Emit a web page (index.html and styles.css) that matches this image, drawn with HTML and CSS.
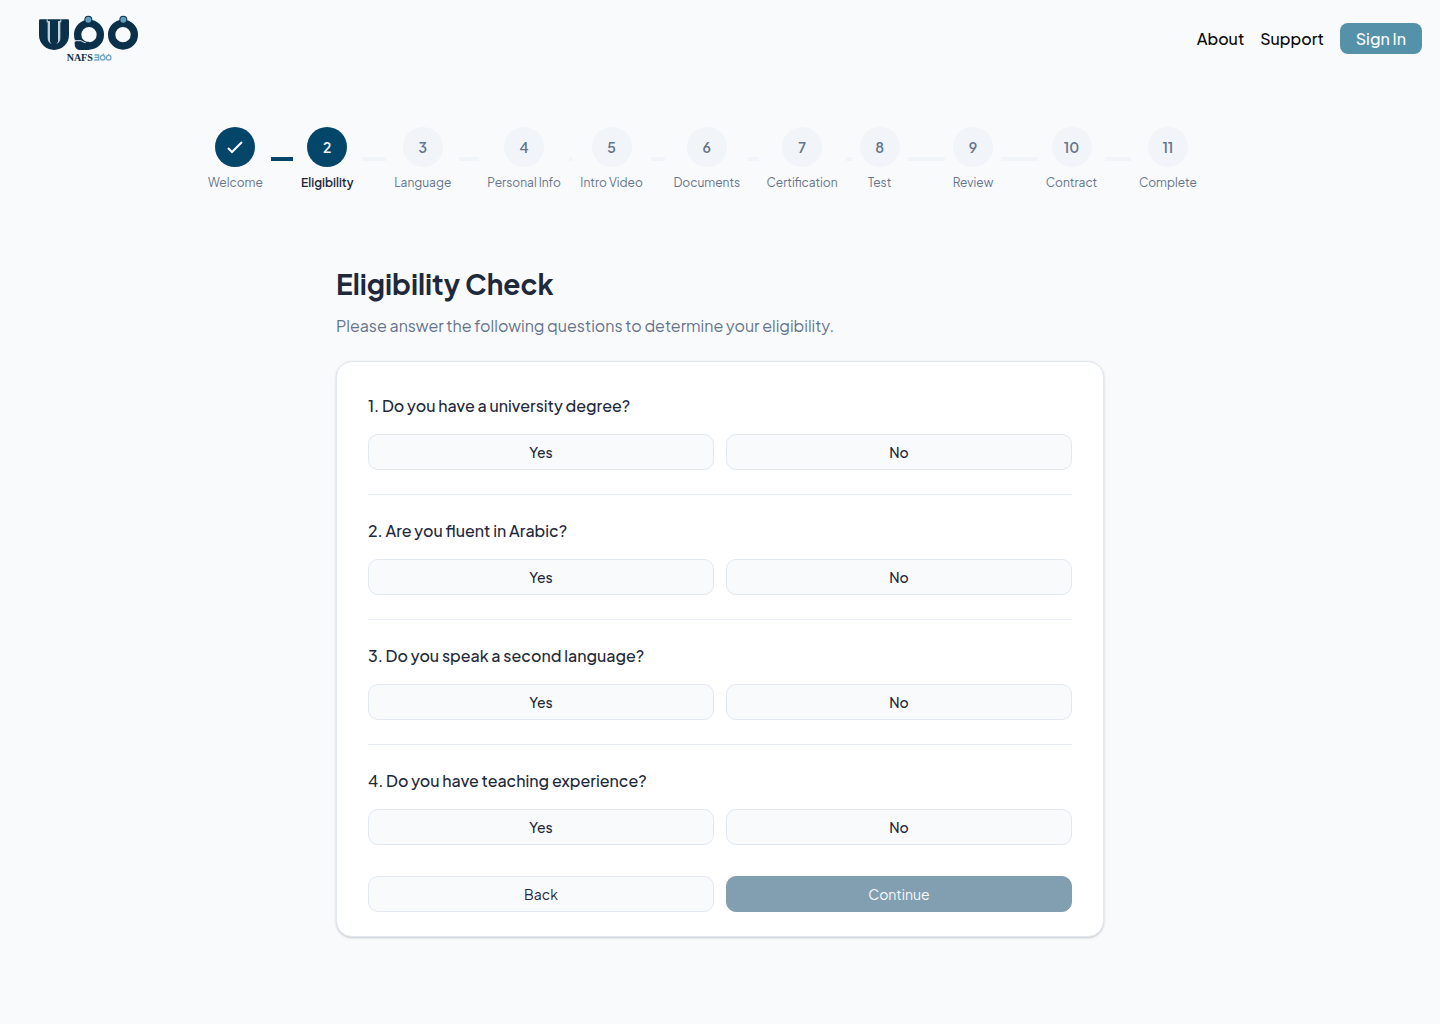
FILE: index.html
```html
<!DOCTYPE html>
<html lang="en">
<head>
<meta charset="utf-8">
<meta name="viewport" content="width=device-width, initial-scale=1">
<title>Eligibility Check</title>
<link rel="stylesheet" href="styles.css">
</head>
<body>
<header class="header">
  <a class="logo" href="#" aria-label="Nafs home">
    <svg viewBox="27 21 300 141" width="100" height="47">
      <path fill="#0b3049" d="M27 38q0-4 4-4h82q4 0 4 4v43a45 45 0 0 1-90 0z"/>
      <path fill="#c3cfd8" d="M50 34h3v5h7v62l5 7q-12-5-12-17V43h-3zM94 34h-3v5h-7v62l-5 7q12-5 12-17V43h3z"/>
      <circle cx="177" cy="80" r="34" fill="none" stroke="#0b3049" stroke-width="22"/>
      <path fill="#0b3049" d="M134 101h43v25h-30q-13-3-13-18z"/>
      <path fill="none" stroke="#dfe6ec" stroke-width="3" d="M131 98h22q6 5 14 6"/>
      <circle cx="279" cy="80" r="34" fill="none" stroke="#0b3049" stroke-width="22"/>
      <circle cx="175" cy="35" r="12" fill="#0b3049"/>
      <circle cx="280" cy="35" r="12" fill="#0b3049"/>
      <circle cx="175" cy="35" r="9" fill="#629fbe"/>
      <circle cx="280" cy="35" r="9" fill="#629fbe"/>
      <text class="logo-text" x="110" y="158">NAFS</text>
      <g fill="none" stroke="#76aac4" stroke-width="4">
        <path d="M193 141h13v15h-13M194 148h12"/>
        <circle cx="218" cy="149" r="7"/>
        <circle cx="236" cy="149" r="7"/>
        <path d="M218 142l4-5M236 142v-4"/>
      </g>
    </svg>
  </a>
  <nav class="nav">
    <a class="nav-link" href="#">About</a>
    <a class="nav-link" href="#">Support</a>
    <button class="sign-in" type="button">Sign In</button>
  </nav>
</header>

<ol class="stepper">
  <li class="step done"><div class="step-body"><span class="dot"><svg viewBox="0 0 20 20" width="20" height="20"><path d="M3 11l4 4L17 5" fill="none" stroke="#fff" stroke-width="2"/></svg></span><span class="label">Welcome</span></div></li>
  <li class="step current" aria-current="step"><div class="step-body"><span class="dot">2</span><span class="label">Eligibility</span></div></li>
  <li class="step"><div class="step-body"><span class="dot">3</span><span class="label">Language</span></div></li>
  <li class="step"><div class="step-body"><span class="dot">4</span><span class="label">Personal Info</span></div></li>
  <li class="step"><div class="step-body"><span class="dot">5</span><span class="label">Intro Video</span></div></li>
  <li class="step"><div class="step-body"><span class="dot">6</span><span class="label">Documents</span></div></li>
  <li class="step"><div class="step-body"><span class="dot">7</span><span class="label">Certification</span></div></li>
  <li class="step"><div class="step-body"><span class="dot">8</span><span class="label">Test</span></div></li>
  <li class="step"><div class="step-body"><span class="dot">9</span><span class="label">Review</span></div></li>
  <li class="step"><div class="step-body"><span class="dot">10</span><span class="label">Contract</span></div></li>
  <li class="step"><div class="step-body"><span class="dot">11</span><span class="label">Complete</span></div></li>
</ol>

<main class="main">
  <h1 class="title">Eligibility Check</h1>
  <p class="intro">Please answer the following questions to determine your eligibility.</p>
  <form class="card">
    <div class="question" role="group" aria-labelledby="q1">
      <p class="prompt" id="q1">1. Do you have a university degree?</p>
      <div class="choices"><button class="btn" type="button">Yes</button><button class="btn" type="button">No</button></div>
    </div>
    <div class="question" role="group" aria-labelledby="q2">
      <p class="prompt" id="q2">2. Are you fluent in Arabic?</p>
      <div class="choices"><button class="btn" type="button">Yes</button><button class="btn" type="button">No</button></div>
    </div>
    <div class="question" role="group" aria-labelledby="q3">
      <p class="prompt" id="q3">3. Do you speak a second language?</p>
      <div class="choices"><button class="btn" type="button">Yes</button><button class="btn" type="button">No</button></div>
    </div>
    <div class="question" role="group" aria-labelledby="q4">
      <p class="prompt" id="q4">4. Do you have teaching experience?</p>
      <div class="choices"><button class="btn" type="button">Yes</button><button class="btn" type="button">No</button></div>
    </div>
    <div class="choices actions"><button class="btn" type="button">Back</button><button class="btn primary" type="submit">Continue</button></div>
  </form>
</main>
</body>
</html>
```
FILE: styles.css
```css
* { box-sizing: border-box; }

body {
  margin: 0;
  background: #f9fafc;
  color: #1e293b;
  font-family: "Plus Jakarta Sans", Inter, sans-serif;
  font-size: 16px;
  line-height: 24px;
}

button { font: inherit; cursor: pointer; }

.header {
  display: flex;
  align-items: center;
  justify-content: space-between;
  padding: 15px 18px 15px 39px;
}

.logo, .logo svg { display: block; }

.logo-text {
  font: bold 30px "Liberation Serif", serif;
  fill: #0b3049;
}

.nav {
  display: flex;
  align-items: center;
  gap: 16px;
  font-weight: 500;
}

.nav-link { color: #0a0a0a; text-decoration: none; }

.sign-in {
  height: 31px;
  padding: 0 16px;
  border: 0;
  border-radius: 8px;
  background: #5592aa;
  color: #f9fafc;
}

.stepper {
  display: grid;
  grid-template-columns: repeat(11, minmax(0, 1fr));
  max-width: 1024px;
  margin: 50px auto 75px;
  padding: 0;
  list-style: none;
}

.step { display: flex; align-items: center; }

.step:not(:last-child)::after {
  content: "";
  flex: 1;
  height: 4px;
  margin: 0 8px;
  background: #f1f4f9;
}

.step.done::after { background: #04456a; }

.step-body {
  display: flex;
  flex-direction: column;
  align-items: center;
  gap: 8px;
}

.dot {
  display: flex;
  align-items: center;
  justify-content: center;
  width: 40px;
  height: 40px;
  border-radius: 50%;
  background: #f1f4f9;
  color: #64748b;
  font-size: 14px;
  font-weight: 600;
}

.done .dot, .current .dot { background: #04456a; color: #f1f5f9; }

.label {
  color: #64748b;
  font-size: 12px;
  line-height: 16px;
  white-space: nowrap;
}

.current .label { color: #1e293b; font-weight: 600; }

.main { max-width: 768px; margin: 0 auto 80px; }

.title {
  margin: 0 0 12px;
  font-size: 28px;
  line-height: 36px;
  font-weight: 700;
}

.intro { margin: 0 0 23px; color: #64748b; }

.card {
  padding: 32px 31px 24px;
  border: 1px solid #e2e8f0;
  border-radius: 16px;
  background: #fff;
  box-shadow: 0 1px 3px rgba(0, 0, 0, 0.1), 0 1px 2px rgba(0, 0, 0, 0.1);
}

.question + .question {
  margin-top: 24px;
  padding-top: 24px;
  border-top: 1px solid #e8edf3;
}

.prompt { margin: 0 0 16px; font-weight: 500; }

.choices {
  display: grid;
  grid-template-columns: 1fr 1fr;
  gap: 12px;
}

.actions { margin-top: 31px; }

.btn {
  height: 36px;
  border: 1px solid #e2e8f0;
  border-radius: 10px;
  background: #f9fafc;
  color: #1e293b;
  font-size: 14px;
  font-weight: 500;
  line-height: 20px;
}

.actions .btn { font-weight: 400; }

.btn.primary {
  border-color: #829fb1;
  background: #829fb1;
  color: #f9fafc;
}
```
